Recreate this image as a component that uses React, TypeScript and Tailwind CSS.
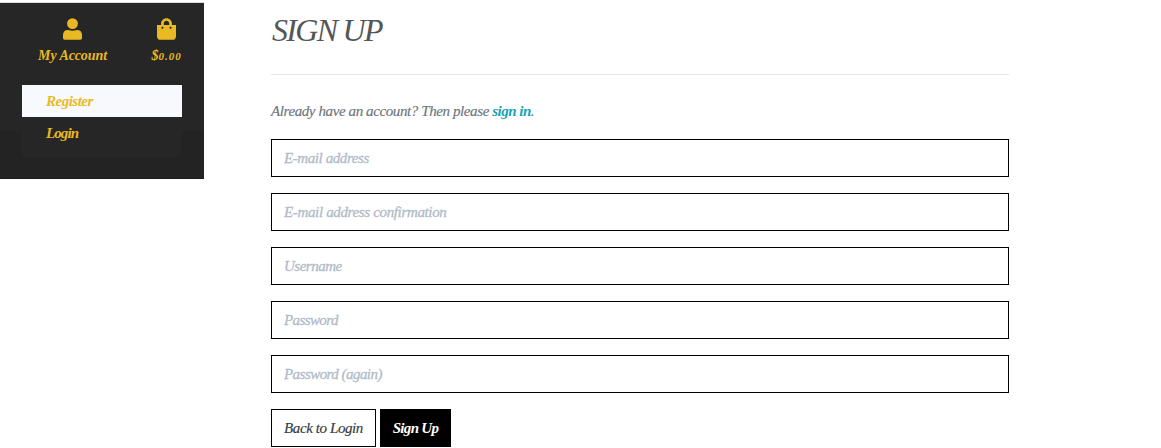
import React from "react";

const fields = [
  { label: "E-mail address", type: "email", spacing: "placeholder:tracking-[-0.42px]" },
  { label: "E-mail address confirmation", type: "email", spacing: "placeholder:tracking-[-0.35px]" },
  { label: "Username", type: "text", spacing: "placeholder:tracking-[-0.5px]" },
  { label: "Password", type: "password", spacing: "placeholder:tracking-[-0.6px]" },
  { label: "Password (again)", type: "password", spacing: "placeholder:tracking-[-0.54px]" },
];

function UserIcon() {
  return (
    <svg className="block h-[22px] w-[19px]" viewBox="0 0 19 22" fill="currentColor">
      <circle cx="9.5" cy="5.6" r="5.4" />
      <path d="M0 20V17.3Q0 12 5.2 12Q9.5 13.6 13.8 12Q19 12 19 17.3V20Q19 21.8 17.2 21.8H1.8Q0 21.8 0 20Z" />
    </svg>
  );
}

function BagIcon() {
  return (
    <svg className="block h-[22px] w-[19px]" viewBox="0 0 448 512" fill="currentColor">
      <path d="M352 160v-32C352 57.42 294.579 0 224 0 153.42 0 96 57.42 96 128v32H0v272c0 44.183 35.817 80 80 80h288c44.183 0 80-35.817 80-80V160h-96zm-192-32c0-35.29 28.71-64 64-64s64 28.71 64 64v32H160v-32zm160 120c-13.255 0-24-10.745-24-24s10.745-24 24-24 24 10.745 24 24-10.745 24-24 24zm-192 0c-13.255 0-24-10.745-24-24s10.745-24 24-24 24 10.745 24 24-10.745 24-24 24z" />
    </svg>
  );
}

export default function App() {
  return (
    <div className="flex h-[448px] items-start overflow-hidden bg-white pt-[2px] font-['Liberation_Serif',serif] text-[15px] italic leading-6">
      <aside className="h-[177px] w-[204px] shrink-0 border-b border-t border-b-[#1d1a1b] border-t-[#d8dad8] bg-linear-to-b from-[#262626] from-[128px] to-[#232323] to-[128px] px-[22px] text-[#e8b923]">
        <div className="flex h-[82px] justify-between pt-[15px] font-bold">
          <a href="#" className="ml-4 flex w-[69px] flex-col items-center">
            <UserIcon />
            <span className="mt-1 whitespace-nowrap text-[14px] tracking-[-0.1px]">My Account</span>
          </a>
          <a href="#" className="flex w-[31px] flex-col items-center">
            <BagIcon />
            <span className="mt-1 whitespace-nowrap text-[14px]">$<span className="text-[11px] tracking-[1px]">0.00</span></span>
          </a>
        </div>
        <nav className="h-[72px] rounded-b bg-[#262626] font-bold">
          <a href="#" className="block h-8 bg-[#f8f9fc] pl-6 leading-8 tracking-[-0.5px]">Register</a>
          <a href="#" className="block h-8 pl-6 leading-8 tracking-[-0.9px]">Login</a>
        </nav>
      </aside>
      <main className="ml-[67px] w-[738px]">
        <h1 className="h-[72px] pl-px pt-2 text-[32px] leading-10 tracking-[-1.7px] text-[#555]">SIGN UP</h1>
        <hr className="border-[#e5e5e5]" />
        <p className="mt-6 h-6 whitespace-nowrap tracking-[-0.4px] text-[#6c757d] [-webkit-text-stroke:0.15px]">
          Already have an account? Then please <a href="#" className="font-bold tracking-[-0.5px] text-[#17a2b8] [-webkit-text-stroke:0px]">sign in</a>.
        </p>
        <form className="mt-4 flex flex-col gap-4">
          {fields.map((f) => (
            <input key={f.label} type={f.type} placeholder={f.label} className={`h-[38px] w-full border border-black px-3 italic [-webkit-text-stroke:0.3px] placeholder:text-[#b0bbc8] ${f.spacing}`} />
          ))}
          <div className="flex gap-1">
            <button type="button" className="h-[38px] w-[105px] whitespace-nowrap border border-black tracking-[-0.4px] text-[#343a40] [-webkit-text-stroke:0.15px]">Back to Login</button>
            <button type="button" className="h-[38px] w-[71px] whitespace-nowrap bg-black font-bold tracking-[-0.7px] text-white">Sign Up</button>
          </div>
        </form>
      </main>
    </div>
  );
}
